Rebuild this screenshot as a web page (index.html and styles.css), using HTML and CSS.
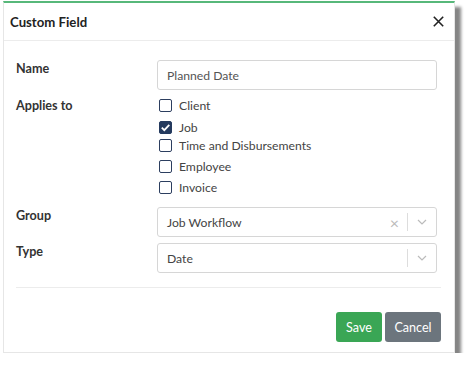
FILE: index.html
```html
<!DOCTYPE html>
<html>
<head>
<meta charset="utf-8">
<link rel="stylesheet" href="styles.css">
</head>
<body>
<div class="dialog">
  <div class="header">
    <span class="title">Custom Field</span>
    <svg class="close" width="11" height="11" viewBox="0 0 11 11"><path d="M0.8 0.8L10.2 10.2M10.2 0.8L0.8 10.2" stroke="#222" stroke-width="1.6" fill="none"/></svg>
  </div>
  <div class="body">
    <div class="row row-name">
      <div class="label">Name</div>
      <div class="input">Planned Date</div>
    </div>
    <div class="row row-applies">
      <div class="label">Applies to</div>
      <div class="checks">
        <div class="check c1"><span class="box"></span>Client</div>
        <div class="check c2"><span class="box checked"><svg width="13" height="13" viewBox="0 0 13 13"><path d="M2.8 6.6L5.3 9.1L10.3 3.8" stroke="#fff" stroke-width="1.8" fill="none"/></svg></span>Job</div>
        <div class="check c3"><span class="box"></span>Time and Disbursements</div>
        <div class="check c4"><span class="box"></span>Employee</div>
        <div class="check c5"><span class="box"></span>Invoice</div>
      </div>
    </div>
    <div class="row row-group">
      <div class="label">Group</div>
      <div class="select">
        <span class="value">Job Workflow</span>
        <span class="clear">×</span>
        <span class="sep"></span>
        <svg class="chev" width="10" height="6" viewBox="0 0 10 6"><path d="M1 1L5 5L9 1" stroke="#bbb" stroke-width="1.2" fill="none"/></svg>
      </div>
    </div>
    <div class="row row-type">
      <div class="label">Type</div>
      <div class="select">
        <span class="value">Date</span>
        <span class="sep"></span>
        <svg class="chev" width="10" height="6" viewBox="0 0 10 6"><path d="M1 1L5 5L9 1" stroke="#bbb" stroke-width="1.2" fill="none"/></svg>
      </div>
    </div>
  </div>
  <div class="footer">
    <button class="btn save">Save</button>
    <button class="btn cancel">Cancel</button>
  </div>
</div>
</body>
</html>
```
FILE: styles.css
```css
html, body {
  margin: 0;
  padding: 0;
  background: #fff;
}
body {
  font-family: "Lato", "Open Sans", sans-serif;
  font-size: 12.2px;
  color: #333;
}
.dialog {
  margin: 1px 0 0 3px;
  width: 452px;
  height: 352px;
  box-sizing: border-box;
  border-top: 2px solid #57b87a;
  border-left: 1px solid #e6e6e6;
  border-right: 1px solid #e6e6e6;
  border-bottom: 1px solid #e6e6e6;
  background: #fff;
  box-shadow: 6px 6px 3px #858585;
  display: flex;
  flex-direction: column;
}
.header {
  height: 37px;
  display: flex;
  align-items: center;
  justify-content: space-between;
  padding: 0 10px 0 6px;
  border-bottom: 1px solid #ececec;
}
.title {
  font-weight: 700;
  font-size: 13.2px;
  color: #222;
}
.body {
  padding: 19px 17px 0 12px;
}
.row {
  display: grid;
  grid-template-columns: 141px 1fr;
}
.label {
  font-weight: 700;
  font-size: 12.6px;
  color: #333;
}
.row-name .label { padding-top: 1px; }
.input {
  height: 28px;
  border: 1px solid #d6d6d6;
  border-radius: 3px;
  display: flex;
  align-items: center;
  padding-left: 9px;
  color: #555;
}
.row-applies {
  margin-top: 6px;
}
.row-applies .label { padding-top: 2px; }
.checks {
  display: flex;
  flex-direction: column;
  padding-left: 2px;
}
.check {
  display: flex;
  align-items: center;
  height: 18px;
  color: #444;
}
.c2 { margin-top: 4px; }
.c3 { margin-top: 0; }
.c4 { margin-top: 3px; }
.c5 { margin-top: 3px; }
.box {
  width: 11px;
  height: 11px;
  border: 1px solid #2c3e5f;
  border-radius: 2px;
  margin-right: 7px;
  flex: none;
  display: flex;
}
.box.checked {
  background: #243a5e;
  border-color: #243a5e;
}
.box svg { margin: -1px; }
.row-group {
  margin-top: 11px;
}
.row-group .label, .row-type .label { padding-top: 1px; }
.row-type {
  margin-top: 6px;
}
.select {
  height: 28px;
  border: 1px solid #d6d6d6;
  border-radius: 3px;
  display: flex;
  align-items: center;
  padding-left: 9px;
  color: #444;
}
.select .value { flex: 1; }
.clear {
  color: #bbb;
  font-size: 16px;
  margin-right: 8px;
}
.sep {
  width: 1px;
  height: 18px;
  background: #ddd;
}
.chev {
  margin: 0 9px 0 9px;
}
.footer {
  margin: 14px 13px 0 12px;
  border-top: 1px solid #ececec;
  display: flex;
  justify-content: flex-end;
  gap: 3px;
  padding-top: 24px;
}
.btn {
  font-family: "Lato", "Open Sans", sans-serif;
  font-size: 12.6px;
  height: 30px;
  border: none;
  border-radius: 3px;
  color: #fff;
  padding: 0 6px;
}
.save { background: #3aa655; width: 46px; }
.cancel { background: #6c757d; width: 56px; }
```
